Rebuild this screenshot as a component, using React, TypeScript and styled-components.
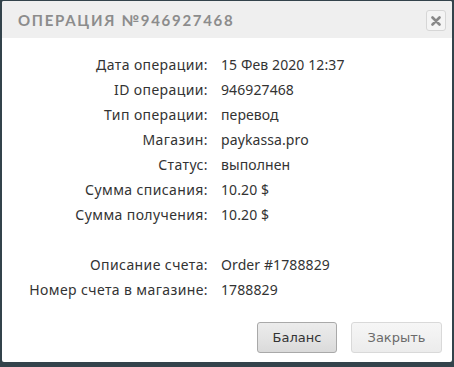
import React from "react"
import styled, { createGlobalStyle } from "styled-components"

const Global = createGlobalStyle`
  html, body {
    margin: 0;
    padding: 0;
    background: #33434b;
  }
`

const Page = styled.div`
  width: 454px;
  height: 367px;
  padding: 1px 2px 0 2px;
  box-sizing: border-box;
`

const Dialog = styled.div`
  width: 450px;
  height: 361px;
  background: #fff;
  border-radius: 2px;
  display: flex;
  flex-direction: column;
  font-family: "Noto Sans", "Open Sans", sans-serif;
`

const Header = styled.div`
  height: 37px;
  background: #efefef;
  display: flex;
  align-items: center;
  justify-content: space-between;
  padding: 0 6px 0 16px;
  border-radius: 2px 2px 0 0;
`

const Title = styled.span`
  font-family: "Lato", "Noto Sans", sans-serif;
  font-weight: 700;
  font-size: 15px;
  letter-spacing: 1.7px;
  color: #8c8c8c;
`

const CloseButton = styled.button`
  width: 20px;
  height: 21px;
  margin-top: 2px;
  padding: 0;
  border: 1px solid #d6d6d6;
  border-radius: 3px;
  background: #f4f4f4;
  display: flex;
  align-items: center;
  justify-content: center;
`

const Details = styled.div`
  display: grid;
  grid-template-columns: 206px 1fr;
  column-gap: 13px;
  grid-auto-rows: 25px;
  padding-top: 14px;
  font-size: 14px;
  color: #333;
`

const Label = styled.div`
  text-align: right;
  white-space: nowrap;
  line-height: 25px;
  letter-spacing: 0.4px;
`

const Value = styled.div`
  line-height: 25px;
  white-space: nowrap;
  letter-spacing: 0.1px;
`

const Spacer = styled.div`
  grid-column: 1 / 3;
  height: 27px;
`

const Footer = styled.div`
  margin-top: auto;
  display: flex;
  justify-content: flex-end;
  gap: 14px;
  padding: 0 10px 9px 0;
`

const Button = styled.button<{ $muted?: boolean }>`
  height: 31px;
  padding: 0 ${p => (p.$muted ? "14px" : "13px")};
  min-width: ${p => (p.$muted ? "91px" : "80px")};
  font-family: "DejaVu Sans", sans-serif;
  font-weight: 400;
  font-size: 13px;
  border-radius: 3px;
  border: 1px solid ${p => (p.$muted ? "#d9d9d9" : "#a9a9a9")};
  color: ${p => (p.$muted ? "#6a6a6a" : "#333")};
  background: ${p =>
    p.$muted
      ? "linear-gradient(#f6f6f6, #ececec)"
      : "linear-gradient(#ececec 0%, #e4e4e4 50%, #dadada 100%)"};
`

const rows: [string, string][] = [
  ["Дата операции:", "15 Фев 2020 12:37"],
  ["ID операции:", "946927468"],
  ["Тип операции:", "перевод"],
  ["Магазин:", "paykassa.pro"],
  ["Статус:", "выполнен"],
  ["Сумма списания:", "10.20 $"],
  ["Сумма получения:", "10.20 $"],
]

const extra: [string, string][] = [
  ["Описание счета:", "Order #1788829"],
  ["Номер счета в магазине:", "1788829"],
]

const App: React.FC = () => {
  return (
    <>
      <Global />
      <Page>
        <Dialog>
          <Header>
            <Title>ОПЕРАЦИЯ №946927468</Title>
            <CloseButton>
              <svg width="10" height="10" viewBox="0 0 10 10">
                <path d="M1.5 1.5 L8.5 8.5 M8.5 1.5 L1.5 8.5" stroke="#888" strokeWidth="2.6" strokeLinecap="round" />
              </svg>
            </CloseButton>
          </Header>
          <Details>
            {rows.map(([l, v]) => (
              <React.Fragment key={l}>
                <Label>{l}</Label>
                <Value>{v}</Value>
              </React.Fragment>
            ))}
            <Spacer />
            {extra.map(([l, v]) => (
              <React.Fragment key={l}>
                <Label>{l}</Label>
                <Value>{v}</Value>
              </React.Fragment>
            ))}
          </Details>
          <Footer>
            <Button>Баланс</Button>
            <Button $muted>Закрыть</Button>
          </Footer>
        </Dialog>
      </Page>
    </>
  )
}

export default App
